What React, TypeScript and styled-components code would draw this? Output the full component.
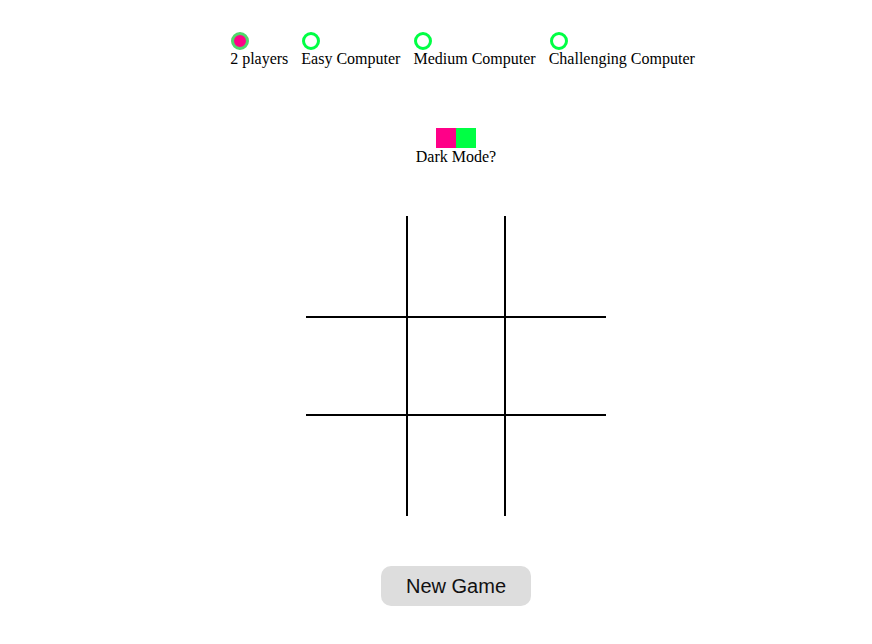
import styled, { createGlobalStyle } from "styled-components";

const PINK = "#ff0088";
const GREEN = "#00ff44";

const GlobalStyle = createGlobalStyle`
  body {
    margin: 8px;
    background: #fff;
    font-family: "Liberation Serif", "Times New Roman", serif;
    font-size: 16px;
    color: #000;
  }
`;

const Page = styled.div`
  display: flex;
  flex-direction: column;
  align-items: center;
  padding: 24px 0 0 40px;
`;

const ModeRow = styled.div`
  display: flex;
  justify-content: center;
`;

const ModeOption = styled.label`
  display: flex;
  flex-direction: column;
  align-items: flex-start;
  margin-left: 13px;
  line-height: 18px;
  cursor: pointer;
`;

const Radio = styled.span<{ $checked?: boolean }>`
  box-sizing: border-box;
  width: 18px;
  height: 18px;
  border-radius: 50%;
  border: 3px solid ${(p) => (p.$checked ? "#4fd86a" : GREEN)};
  background: ${(p) => (p.$checked ? PINK : "#fff")};
  margin-left: 1px;
`;

const ToggleBlock = styled.div`
  display: flex;
  flex-direction: column;
  align-items: center;
  margin-top: 60px;
  line-height: 18px;
`;

const Toggle = styled.div`
  display: flex;
  width: 40px;
  height: 20px;
`;

const Half = styled.span<{ $color: string }>`
  flex: 1;
  background: ${(p) => p.$color};
`;

const Board = styled.div`
  display: grid;
  grid-template-columns: repeat(3, 100px);
  grid-template-rows: repeat(3, 100px);
  margin-top: 50px;
`;

const Cell = styled.div<{ $col: number; $row: number }>`
  box-sizing: border-box;
  border-left: ${(p) => (p.$col === 1 ? "2px solid #000" : "none")};
  border-right: ${(p) => (p.$col === 1 ? "2px solid #000" : "none")};
  border-top: ${(p) => (p.$row === 1 ? "2px solid #000" : "none")};
  border-bottom: ${(p) => (p.$row === 1 ? "2px solid #000" : "none")};
`;

const NewGameButton = styled.button`
  margin-top: 50px;
  width: 150px;
  height: 40px;
  border: none;
  border-radius: 10px;
  background: #dddddd;
  font-family: "Liberation Sans", Arial, sans-serif;
  font-size: 20px;
  color: #111;
  cursor: pointer;
`;

const modes = ["2 players", "Easy Computer", "Medium Computer", "Challenging Computer"];

export default function App() {
  return (
    <>
      <GlobalStyle />
      <Page>
        <ModeRow>
          {modes.map((m, i) => (
            <ModeOption key={m}>
              <Radio $checked={i === 0} />
              {m}
            </ModeOption>
          ))}
        </ModeRow>
        <ToggleBlock>
          <Toggle>
            <Half $color={PINK} />
            <Half $color={GREEN} />
          </Toggle>
          Dark Mode?
        </ToggleBlock>
        <Board>
          {Array.from({ length: 9 }).map((_, i) => (
            <Cell key={i} $col={i % 3} $row={Math.floor(i / 3)} />
          ))}
        </Board>
        <NewGameButton>New Game</NewGameButton>
      </Page>
    </>
  );
}
